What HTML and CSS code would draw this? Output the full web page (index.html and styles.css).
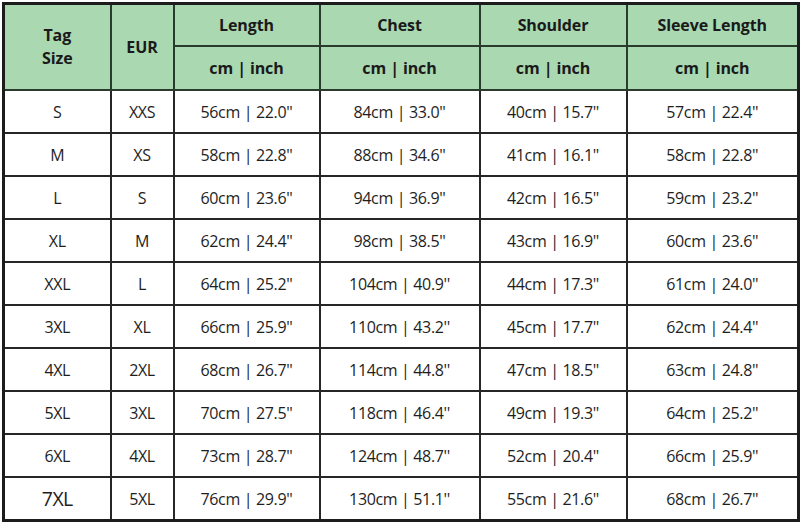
FILE: index.html
```html
<!DOCTYPE html>
<html>
<head>
<meta charset="utf-8">
<link rel="stylesheet" href="styles.css">
</head>
<body>
<table class="chart">
  <colgroup>
    <col class="c-tag"><col class="c-eur"><col class="c-len"><col class="c-chest"><col class="c-sh"><col class="c-sl">
  </colgroup>
  <thead>
    <tr class="h1">
      <th rowspan="2">Tag<br>Size</th>
      <th rowspan="2">EUR</th>
      <th>Length</th>
      <th>Chest</th>
      <th>Shoulder</th>
      <th>Sleeve Length</th>
    </tr>
    <tr class="h2">
      <th>cm | inch</th>
      <th>cm | inch</th>
      <th>cm | inch</th>
      <th>cm | inch</th>
    </tr>
  </thead>
  <tbody>
    <tr><td>S</td><td>XXS</td><td>56cm | 22.0''</td><td>84cm | 33.0''</td><td>40cm | 15.7''</td><td>57cm | 22.4''</td></tr>
    <tr><td>M</td><td>XS</td><td>58cm | 22.8''</td><td>88cm | 34.6''</td><td>41cm | 16.1''</td><td>58cm | 22.8''</td></tr>
    <tr><td>L</td><td>S</td><td>60cm | 23.6''</td><td>94cm | 36.9''</td><td>42cm | 16.5''</td><td>59cm | 23.2''</td></tr>
    <tr><td>XL</td><td>M</td><td>62cm | 24.4''</td><td>98cm | 38.5''</td><td>43cm | 16.9''</td><td>60cm | 23.6''</td></tr>
    <tr><td>XXL</td><td>L</td><td>64cm | 25.2''</td><td>104cm | 40.9''</td><td>44cm | 17.3''</td><td>61cm | 24.0''</td></tr>
    <tr><td>3XL</td><td>XL</td><td>66cm | 25.9''</td><td>110cm | 43.2''</td><td>45cm | 17.7''</td><td>62cm | 24.4''</td></tr>
    <tr><td>4XL</td><td>2XL</td><td>68cm | 26.7''</td><td>114cm | 44.8''</td><td>47cm | 18.5''</td><td>63cm | 24.8''</td></tr>
    <tr><td>5XL</td><td>3XL</td><td>70cm | 27.5''</td><td>118cm | 46.4''</td><td>49cm | 19.3''</td><td>64cm | 25.2''</td></tr>
    <tr><td>6XL</td><td>4XL</td><td>73cm | 28.7''</td><td>124cm | 48.7''</td><td>52cm | 20.4''</td><td>66cm | 25.9''</td></tr>
    <tr><td class="big">7XL</td><td>5XL</td><td>76cm | 29.9''</td><td>130cm | 51.1''</td><td>55cm | 21.6''</td><td>68cm | 26.7''</td></tr>
  </tbody>
</table>
</body>
</html>
```
FILE: styles.css
```css
html, body {
  margin: 0;
  padding: 0;
  background: #ffffff;
}
.chart {
  margin: 2px 0 0 2px;
  border-collapse: collapse;
  table-layout: fixed;
  width: 795px;
  font-family: "Open Sans", "Noto Sans", sans-serif;
  color: #1e1e1e;
  border: 3px solid #1c1c1c;
}
.c-tag { width: 107px; }
.c-eur { width: 63px; }
.c-len { width: 146px; }
.c-chest { width: 160px; }
.c-sh { width: 147px; }
.c-sl { width: 172px; }
.chart th, .chart td {
  border: 2px solid #262626;
  text-align: center;
  padding: 0;
}
.chart th {
  background: #a9d8b1;
  font-weight: 700;
  font-size: 16px;
  line-height: 23px;
  color: #1a1a1a;
  letter-spacing: -0.1px;
}
.chart .h1 th { height: 40px; }
.chart .h2 th { height: 42px; }
.chart .h1 th, .chart .h2 th { border-color: #2a3a2c; }
.chart td {
  height: 41px;
  font-size: 16px;
  letter-spacing: -0.35px;
  color: #1e1e1e;
}
.chart td.big { font-size: 19.5px; letter-spacing: -0.6px; }
```
